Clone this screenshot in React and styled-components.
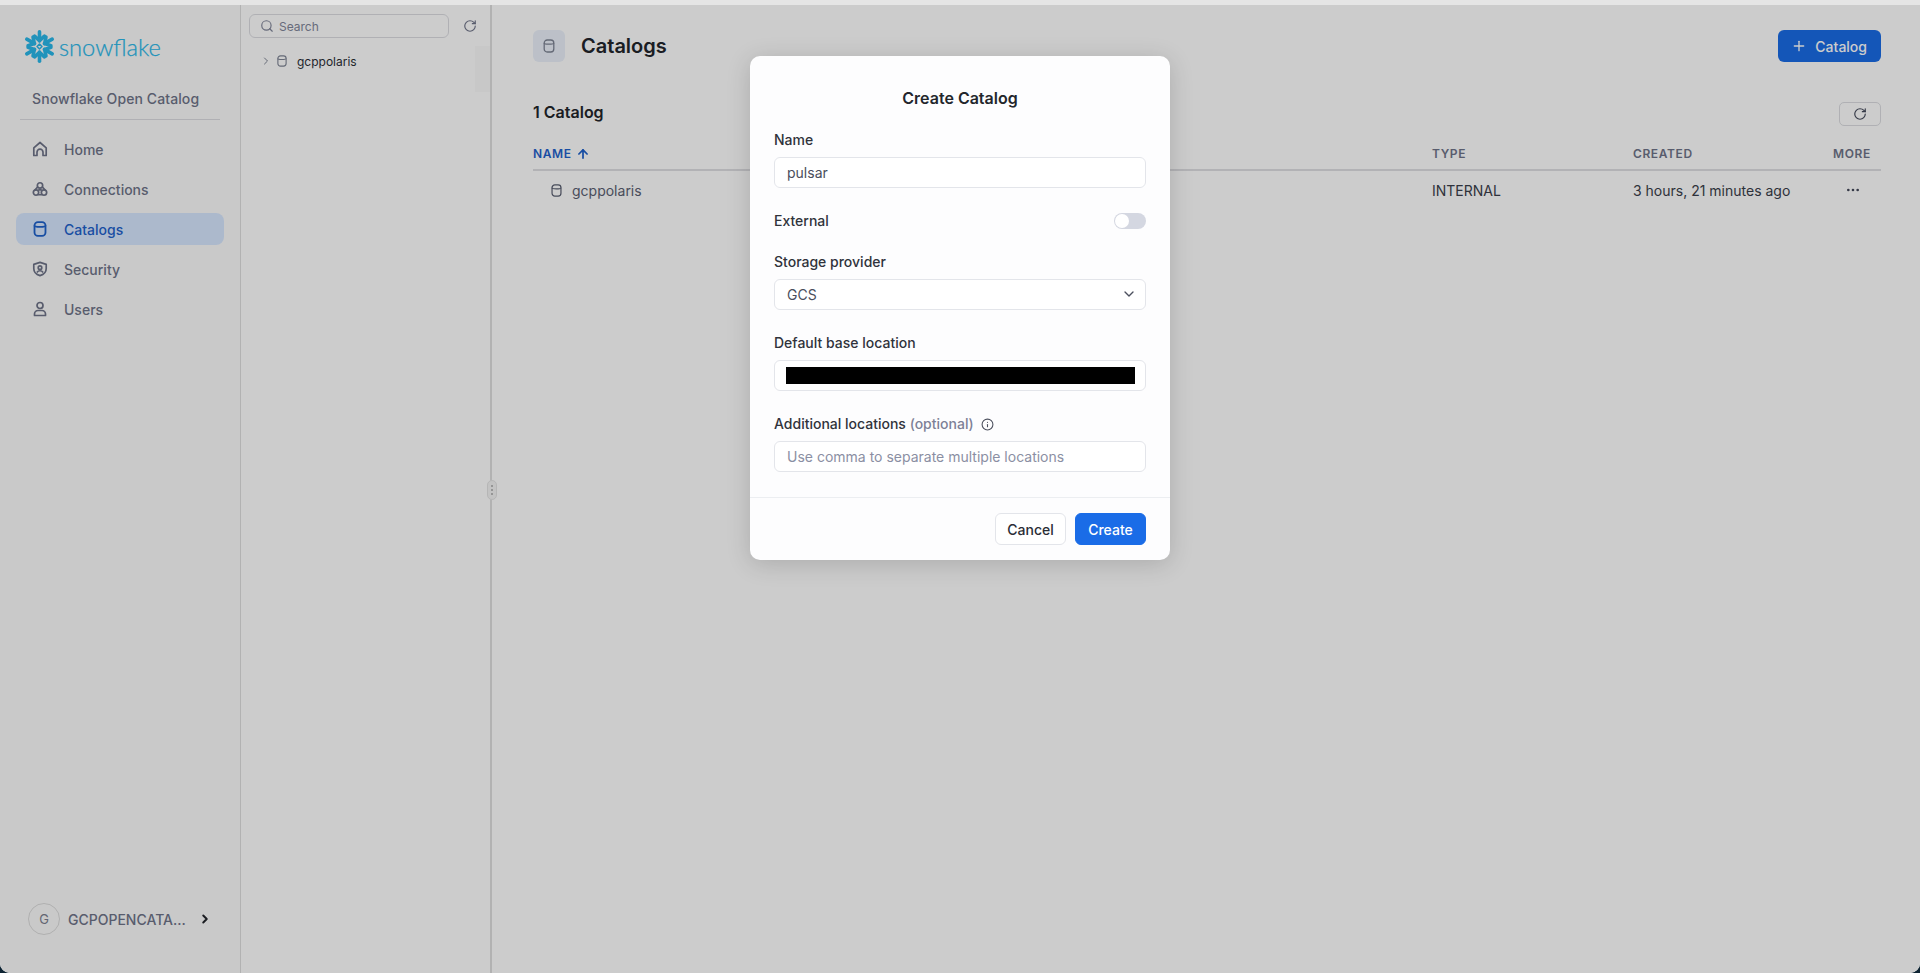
import React from "react";
import styled, { createGlobalStyle } from "styled-components";
import { ChevronDown, ChevronRight, Info, MoreHorizontal, Plus, RotateCw, Search, ArrowUp } from "lucide-react";

const GlobalStyle = createGlobalStyle`
html, body { margin: 0; height: 100%; background: #0e2433; }
body { font-family: "Inter", "Liberation Sans", sans-serif; overflow: hidden; }
* { box-sizing: border-box; }
`;

const Page = styled.div`
display: flex;
flex-direction: column;
height: 973px;
`;

const TopStrip = styled.div`
height: 5px;
background: #e5e5e5;
`;

const Shell = styled.div`
position: relative;
flex: 1;
display: flex;
background: #fff;
border-radius: 0 0 10px 10px;
overflow: hidden;
`;

const Sidebar = styled.aside`
width: 241px;
flex-shrink: 0;
display: flex;
flex-direction: column;
padding-top: 25px;
background: #fcfcfc;
border-right: 1px solid #dfdfdf;
`;

const LogoRow = styled.div`
display: flex;
align-items: center;
gap: 3px;
height: 33px;
padding-left: 23px;
`;

const LogoText = styled.span`
font-family: "Lato", "Inter", sans-serif;
font-weight: 300;
font-size: 23.7px;
color: #2ab8ea;
line-height: 32px;
-webkit-text-stroke: 0.25px #2ab8ea;
`;

const ProductName = styled.div`
margin: 26px 20px 0;
padding: 0 0 10px 12px;
border-bottom: 1px solid #dcdde2;
font-size: 14px;
line-height: 20px;
font-weight: 500;
letter-spacing: 0.1px;
color: #6f7489;
white-space: nowrap;
`;

const Nav = styled.nav`
display: flex;
flex-direction: column;
gap: 8px;
margin: 13px 16px 0;
`;

const NavItem = styled.a`
display: flex;
align-items: center;
gap: 16px;
height: 32px;
padding-left: 16px;
border-radius: 8px;
font-size: 14px;
font-weight: 500;
color: ${(p) => (p.$active ? "#1f62cc" : "#6f7489")};
background: ${(p) => (p.$active ? "#d8e8ff" : "transparent")};
`;

const AccountRow = styled.div`
display: flex;
align-items: center;
margin-top: auto;
margin-bottom: 38px;
padding-left: 28px;
`;

const Avatar = styled.div`
width: 32px;
height: 32px;
display: flex;
align-items: center;
justify-content: center;
border: 1px solid #dcdcdc;
border-radius: 50%;
font-size: 13px;
color: #7d8090;
`;

const AccountName = styled.span`
margin-left: 8px;
width: 130px;
font-size: 14px;
font-weight: 500;
color: #6f7489;
`;

const TreePanel = styled.section`
position: relative;
width: 251px;
flex-shrink: 0;
padding: 9px 8px;
background: #fff;
border-right: 2px solid #dfdfdf;
`;

const SearchRow = styled.div`
display: flex;
align-items: center;
`;

const SearchBox = styled.div`
display: flex;
align-items: center;
gap: 5px;
width: 200px;
height: 24px;
padding-left: 10px;
border: 1px solid #dcdde2;
border-radius: 6px;
font-size: 12px;
color: #81869a;
`;

const SearchRefresh = styled.span`
display: flex;
margin-left: 14px;
color: #6f7489;
`;

const TreeItem = styled.div`
display: flex;
align-items: center;
height: 20px;
margin-top: 13px;
padding-left: 11px;
font-size: 12px;
color: #2b2e36;
font-weight: 400;
`;

const TreeIcons = styled.span`
display: flex;
align-items: center;
gap: 4px;
margin-right: 9px;
color: #7e8494;
`;

const ScrollStrip = styled.div`
position: absolute;
top: 41px;
right: 0;
width: 15px;
height: 46px;
background: #fafafa;
`;

const ResizeHandle = styled.div`
position: absolute;
top: 475px;
left: 487px;
width: 10px;
height: 20px;
display: flex;
flex-direction: column;
align-items: center;
justify-content: center;
gap: 2px;
background: #f4f4f4;
border: 1px solid #e4e4e4;
border-radius: 5px;
`;

const HandleDot = styled.i`
width: 2px;
height: 2px;
border-radius: 50%;
background: #a8a8a8;
`;

const Main = styled.main`
flex: 1;
min-width: 0;
padding: 25px 39px 0 41px;
background: #fff;
`;

const HeaderRow = styled.header`
display: flex;
align-items: center;
height: 32px;
`;

const HeaderIcon = styled.span`
display: flex;
align-items: center;
justify-content: center;
width: 32px;
height: 32px;
border-radius: 6px;
background: #ebf1fb;
color: #7e8494;
`;

const PageTitle = styled.h1`
margin: 0 0 0 16px;
font-size: 20px;
font-weight: 600;
color: #22252b;
`;

const AddButton = styled.button`
display: flex;
align-items: center;
gap: 8px;
height: 32px;
margin-left: auto;
padding: 0 14px 0 13px;
border: none;
border-radius: 6px;
background: #1a6ce7;
color: #fff;
font: 500 14px "Inter", sans-serif;
`;

const CountRow = styled.div`
display: flex;
align-items: center;
justify-content: space-between;
height: 24px;
margin-top: 40px;
`;

const CountText = styled.h2`
margin: 0;
padding-bottom: 5px;
font-size: 16px;
font-weight: 600;
color: #22252b;
`;

const RefreshButton = styled.button`
display: flex;
align-items: center;
justify-content: center;
width: 42px;
height: 24px;
padding: 0;
border: 1px solid #dcdde2;
border-radius: 5px;
background: transparent;
color: #44495a;
`;

const TableRow = styled.div`
display: grid;
grid-template-columns: 899px 201px 200px 1fr;
align-items: center;
`;

const TableHead = styled(TableRow)`
height: 33px;
margin-top: 12px;
border-bottom: 2px solid #dfdfe3;
font-size: 12px;
font-weight: 600;
letter-spacing: 0.6px;
color: #6f7489;
`;

const SortHead = styled.span`
display: flex;
align-items: center;
gap: 4px;
color: #1f62cc;
`;

const TableBody = styled(TableRow)`
height: 38px;
font-size: 14px;
color: #3a3e4a;
`;

const NameCell = styled.span`
display: flex;
align-items: center;
gap: 9px;
padding-left: 17px;
color: #5b6072;
`;

const MoreCell = styled.span`
display: flex;
padding-left: 12px;
color: #44495a;
`;

const Overlay = styled.div`
position: absolute;
inset: 0;
display: flex;
justify-content: center;
align-items: flex-start;
padding-top: 51px;
background: rgba(0, 0, 0, 0.2);
`;

const Modal = styled.div`
width: 420px;
background: #fdfdfe;
border-radius: 10px;
box-shadow: 0 4px 24px rgba(0, 0, 0, 0.16);
`;

const ModalTitle = styled.h3`
margin: 0;
padding-top: 30px;
font-size: 16px;
line-height: 24px;
font-weight: 600;
text-align: center;
color: #23262c;
`;

const ModalBody = styled.div`
display: flex;
flex-direction: column;
gap: 23px;
padding: 20px 24px 25px;
border-bottom: 1px solid #eceef1;
`;

const Field = styled.div`
display: flex;
flex-direction: column;
gap: 7px;
`;

const FieldLabel = styled.label`
display: flex;
align-items: center;
gap: 7px;
font-size: 14px;
line-height: 20px;
font-weight: 500;
color: #30333b;
`;

const Optional = styled.span`
color: #7d8197;
`;

const InfoMark = styled.span`
display: flex;
color: #4c505e;
`;

const TextInput = styled.input`
width: 100%;
height: 31px;
padding: 0 12px 1px;
border: 1px solid #e3e5ea;
border-radius: 6px;
background: #fff;
font: 400 14px "Inter", sans-serif;
color: #4a4e5c;
outline: none;
&::placeholder { color: #8b8fa3; opacity: 1; }
`;

const ToggleRow = styled.div`
display: flex;
align-items: center;
justify-content: space-between;
height: 20px;
margin-bottom: -2px;
`;

const Toggle = styled.span`
width: 32px;
height: 16px;
padding: 1px;
border-radius: 8px;
background: #d4d7e1;
`;

const ToggleKnob = styled.i`
display: block;
width: 14px;
height: 14px;
border-radius: 50%;
background: #fff;
`;

const SelectBox = styled.div`
display: flex;
align-items: center;
justify-content: space-between;
height: 31px;
padding: 0 8px 1px 12px;
border: 1px solid #e3e5ea;
border-radius: 6px;
background: #fff;
font-size: 14px;
color: #4a4e5c;
`;

const RedactedBox = styled.div`
display: flex;
align-items: center;
height: 31px;
padding: 0 10px 0 11px;
border: 1px solid #e3e5ea;
border-radius: 6px;
background: #fff;
`;

const RedactedBar = styled.div`
width: 100%;
height: 17px;
background: #000;
`;

const ModalFooter = styled.div`
display: flex;
justify-content: flex-end;
gap: 9px;
padding: 15px 24px 15px;
`;

const FooterButton = styled.button`
width: 71px;
height: 32px;
padding: 0;
border: 1px solid ${(p) => (p.$primary ? "#1a6ce7" : "#e3e5ea")};
border-radius: 6px;
background: ${(p) => (p.$primary ? "#1a6ce7" : "#fff")};
color: ${(p) => (p.$primary ? "#fff" : "#2a2d35")};
font: 500 14px "Inter", sans-serif;
`;

// snowflake mark: one arm, turned six times
const SnowflakeMark = () => (
  <svg width="33" height="33" viewBox="0 0 32 32" fill="none" stroke="#2ab8ea" strokeWidth="3.500" strokeLinecap="round" strokeLinejoin="round">
    {[0, 60, 120, 180, 240, 300].map((a) => (
      <g key={a} transform={`rotate(${a} 16 16)`}>
        <path d="M16 10.500V1.800" />
        <path d="M11.200 6L16 10.200 20.800 6" />
      </g>
    ))}
    <path d="M16 13.600l2.400 2.400-2.400 2.400-2.400-2.400z" strokeWidth="1.500" />
  </svg>
);

const HomeIcon = () => (
  <svg width="16" height="16" viewBox="0 0 16 16" fill="none" stroke="currentColor" strokeWidth="1.700" strokeLinejoin="round">
    <path d="M1.800 14.500V6.800L8 1.500l6.200 5.300v7.700h-3.200v-3.300a3 3 0 0 0-6 0v3.300z" />
  </svg>
);

const ConnectionsIcon = () => (
  <svg width="16" height="16" viewBox="0 0 18 18" fill="none" stroke="currentColor" strokeWidth="1.900" strokeLinejoin="round">
    <circle cx="9" cy="5" r="3" />
    <circle cx="4.500" cy="13" r="3" />
    <circle cx="13.500" cy="13" r="3" />
    <path d="M6.500 6.500L3 10.500M11.500 6.500l3.500 4M7 15.500h4M7 10h4" />
  </svg>
);

const SecurityIcon = () => (
  <svg width="16" height="16" viewBox="0 0 18 18" fill="none" stroke="currentColor" strokeWidth="1.900" strokeLinejoin="round">
    <path d="M9 1.500l7 2.300v4.700c0 4-3 6.800-7 8-4-1.200-7-4-7-8V3.800z" />
    <circle cx="9" cy="7.500" r="2" />
    <path d="M5.500 13c1-1.500 2.200-2 3.500-2s2.500.5 3.500 2" />
  </svg>
);

const UserIcon = () => (
  <svg width="16" height="16" viewBox="0 0 16 16" fill="none" stroke="currentColor" strokeWidth="1.700" strokeLinejoin="round">
    <circle cx="8" cy="4.500" r="3" />
    <path d="M2.500 14.500v-1.500a3.500 3.500 0 0 1 3.500-3.500h4a3.500 3.500 0 0 1 3.500 3.500v1.500z" />
  </svg>
);

// plain cylinder, one arc under the lid
const DbIcon = ({ size = 14, weight = 1.3 }) => (
  <svg width={size} height={size} viewBox="0 0 14 14" fill="none" stroke="currentColor" strokeWidth={weight}>
    <rect x="2.200" y="1" width="9.600" height="12" rx="3" />
    <path d="M2.200 4c0 1.600 9.600 1.600 9.600 0" />
  </svg>
);

const navItems = [
  { label: "Home", icon: <HomeIcon /> },
  { label: "Connections", icon: <ConnectionsIcon /> },
  { label: "Catalogs", icon: <DbIcon size={16} weight={1.6} />, active: true },
  { label: "Security", icon: <SecurityIcon /> },
  { label: "Users", icon: <UserIcon /> },
];

const App = () => (
  <Page>
    <GlobalStyle />
    <TopStrip />
    <Shell>
      <Sidebar>
        <LogoRow>
          <SnowflakeMark />
          <LogoText>snowflake</LogoText>
        </LogoRow>
        <ProductName>Snowflake Open Catalog</ProductName>
        <Nav>
          {navItems.map((item) => (
            <NavItem key={item.label} $active={item.active}>
              {item.icon}
              {item.label}
            </NavItem>
          ))}
        </Nav>
        <AccountRow>
          <Avatar>G</Avatar>
          <AccountName>GCPOPENCATA...</AccountName>
          <ChevronRight size={14} strokeWidth={3.4} color="#22252b" />
        </AccountRow>
      </Sidebar>

      <TreePanel>
        <SearchRow>
          <SearchBox>
            <Search size={14} />
            Search
          </SearchBox>
          <SearchRefresh>
            <RotateCw size={14} />
          </SearchRefresh>
        </SearchRow>
        <TreeItem>
          <TreeIcons>
            <ChevronRight size={12} />
            <DbIcon size={12} />
          </TreeIcons>
          gcppolaris
        </TreeItem>
        <ScrollStrip />
      </TreePanel>

      <Main>
        <HeaderRow>
          <HeaderIcon>
            <DbIcon />
          </HeaderIcon>
          <PageTitle>Catalogs</PageTitle>
          <AddButton>
            <Plus size={16} />
            Catalog
          </AddButton>
        </HeaderRow>
        <CountRow>
          <CountText>1 Catalog</CountText>
          <RefreshButton>
            <RotateCw size={14} />
          </RefreshButton>
        </CountRow>
        <TableHead>
          <SortHead>
            NAME
            <ArrowUp size={14} strokeWidth={3} />
          </SortHead>
          <span>TYPE</span>
          <span>CREATED</span>
          <span>MORE</span>
        </TableHead>
        <TableBody>
          <NameCell>
            <DbIcon size={13} />
            gcppolaris
          </NameCell>
          <span>INTERNAL</span>
          <span>3 hours, 21 minutes ago</span>
          <MoreCell>
            <MoreHorizontal size={16} />
          </MoreCell>
        </TableBody>
      </Main>

      <ResizeHandle>
        <HandleDot />
        <HandleDot />
        <HandleDot />
      </ResizeHandle>

      <Overlay>
        <Modal>
          <ModalTitle>Create Catalog</ModalTitle>
          <ModalBody>
            <Field>
              <FieldLabel>Name</FieldLabel>
              <TextInput readOnly value="pulsar" />
            </Field>
            <ToggleRow>
              <FieldLabel>External</FieldLabel>
              <Toggle>
                <ToggleKnob />
              </Toggle>
            </ToggleRow>
            <Field>
              <FieldLabel>Storage provider</FieldLabel>
              <SelectBox>
                GCS
                <ChevronDown size={16} color="#4c505e" />
              </SelectBox>
            </Field>
            <Field>
              <FieldLabel>Default base location</FieldLabel>
              <RedactedBox>
                <RedactedBar />
              </RedactedBox>
            </Field>
            <Field>
              <FieldLabel>
                <span>
                  Additional locations <Optional>(optional)</Optional>
                </span>
                <InfoMark>
                  <Info size={13} />
                </InfoMark>
              </FieldLabel>
              <TextInput readOnly placeholder="Use comma to separate multiple locations" />
            </Field>
          </ModalBody>
          <ModalFooter>
            <FooterButton>Cancel</FooterButton>
            <FooterButton $primary>Create</FooterButton>
          </ModalFooter>
        </Modal>
      </Overlay>
    </Shell>
  </Page>
);

export default App;
